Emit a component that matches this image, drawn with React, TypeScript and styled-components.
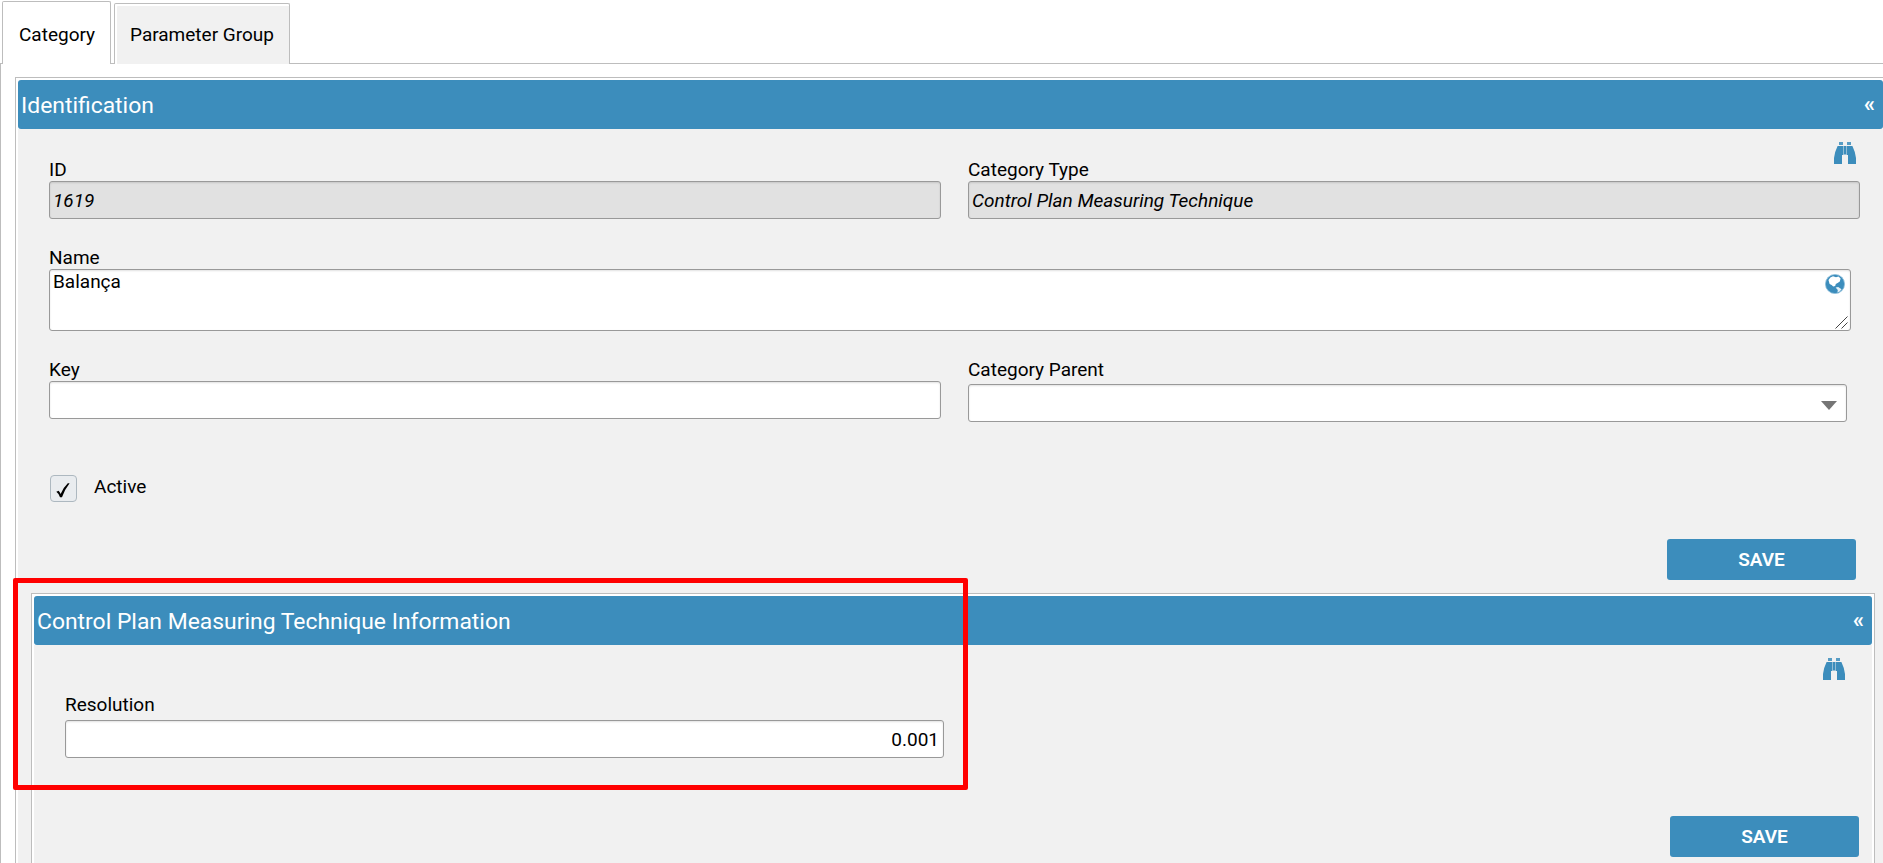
import React, { useState } from 'react';
import styled, { createGlobalStyle } from 'styled-components';

const BLUE = '#3c8dbc';
const LINE = '#bdbdbd';

const App: React.FC = () => {
  const [name, setName] = useState('Balança');
  const [key, setKey] = useState('');
  const [active, setActive] = useState(true);
  const [resolution, setResolution] = useState('0.001');

  return (
    <Page>
      <GlobalStyle />
      <TabBar>
        <Tab $active>Category</Tab>
        <Tab>Parameter Group</Tab>
      </TabBar>

      <Content>
        <Panel>
          <PanelHeader>
            <Title>Identification</Title>
            <Collapse>«</Collapse>
          </PanelHeader>
          <PanelBody>
            <Tools $height={29}>
              <Binoculars />
            </Tools>

            <Form>
              <Columns>
                <Field>
                  <Label>ID</Label>
                  <Input value="1619" readOnly />
                </Field>
                <Field>
                  <Label>Category Type</Label>
                  <Input value="Control Plan Measuring Technique" readOnly />
                </Field>
              </Columns>

              <Field>
                <Label>Name</Label>
                <TextAreaWrap>
                  <TextArea value={name} onChange={(e) => setName(e.target.value)} />
                  <GlobeSlot>
                    <Globe />
                  </GlobeSlot>
                  <Grip>
                    <svg width="13" height="13" viewBox="0 0 13 13">
                      <path d="M0.500 12.500L12.500 0.500M6.500 12.500L12.500 6.500" stroke="#444" fill="none" />
                    </svg>
                  </Grip>
                </TextAreaWrap>
              </Field>

              <Columns>
                <Field>
                  <Label>Key</Label>
                  <Input value={key} onChange={(e) => setKey(e.target.value)} />
                </Field>
                <Field>
                  <Label $gap={3}>Category Parent</Label>
                  <Select>
                    <svg width="16" height="9" viewBox="0 0 16 9">
                      <path d="M0 0h16L8 9z" fill="#757575" />
                    </svg>
                  </Select>
                </Field>
              </Columns>
            </Form>

            <CheckRow>
              <CheckBox onClick={() => setActive(!active)}>
                {active && (
                  <svg width="14" height="15" viewBox="0 0 14 15">
                    <path d="M0.3 8.8L2.6 7.8Q3.9 9 4.6 11Q7.5 4.3 11.8 0.3L13.6 0.3Q9 6 6 14.3L4 14.3Q2.6 10.3 0.3 8.8z" fill="#000" />
                  </svg>
                )}
              </CheckBox>
              <span>Active</span>
            </CheckRow>

            <Actions $top={37} $right={27}>
              <Button>SAVE</Button>
            </Actions>

            <SubPanel>
              <PanelHeader>
                <Title>Control Plan Measuring Technique Information</Title>
                <Collapse>«</Collapse>
              </PanelHeader>
              <PanelBody>
                <Tools $height={48}>
                  <Binoculars />
                </Tools>
                <Form>
                  <Field>
                    <Label $gap={4}>Resolution</Label>
                    <Input
                      $numeric
                      value={resolution}
                      onChange={(e) => setResolution(e.target.value)}
                    />
                  </Field>
                </Form>
                <Actions $top={58} $right={13}>
                  <Button>SAVE</Button>
                </Actions>
              </PanelBody>
            </SubPanel>
          </PanelBody>
        </Panel>
      </Content>

      <Highlight />
    </Page>
  );
};

export default App;

const Binoculars: React.FC = () => (
  <svg width="22" height="22" viewBox="0 0 22 22">
    <path d="M5 0h4v3H5zM13 0h4v3h-4z" fill={BLUE} opacity="0.85" />
    <path d="M3.6 4H9V13H8V22H0V16Q1 9 3.6 4zM18.4 4H13V13H14V22H22V16Q21 9 18.4 4z" fill={BLUE} />
    <path d="M9.7 4h2.6v8.5H9.7z" fill={BLUE} />
    <path d="M9 4h.7v9H9zM12.3 4h.7v9h-.7z" fill={BLUE} opacity="0.45" />
  </svg>
);

const Globe: React.FC = () => (
  <svg width="20" height="20" viewBox="0 0 20 20">
    <circle cx="10" cy="10" r="9.6" fill={BLUE} stroke="#8fc0dc" strokeWidth="0.8" />
    <path d="M3.5 6Q5 3 8 2.2L11 3.2L13.5 2.4L15.6 4.5L14.8 7.5L12.6 9L10.8 10L10.2 12L8.2 12.6L6.6 11L4.6 10z" fill="#fff" />
    <path d="M10.6 13.4L13.2 13L16.6 15.2L14.6 17.6L12.4 18.4L12.8 16z" fill="#e4f0f7" />
  </svg>
);

const GlobalStyle = createGlobalStyle`
  * {
    box-sizing: border-box;
  }

  body {
    margin: 0;
    background: #fff;
    overflow: hidden;
  }

  body, input, textarea, button {
    font-family: Roboto, 'Liberation Sans', sans-serif;
    font-size: 19px;
    color: #000;
  }
`;

const Page = styled.div`
  position: relative;
  height: 863px;
  display: flex;
  flex-direction: column;
  overflow: hidden;
`;

const TabBar = styled.div`
  position: relative;
  z-index: 1;
  flex: none;
  display: flex;
  align-items: flex-end;
  gap: 3px;
  height: 64px;
  margin-bottom: -1px;
  padding-left: 2px;
`;

const Tab = styled.div<{ $active?: boolean }>`
  width: ${(p) => (p.$active ? 109 : 176)}px;
  height: ${(p) => (p.$active ? 63 : 61)}px;
  padding: ${(p) => (p.$active ? '21px 0 0 16px' : '19px 0 0 15px')};
  border: 1px solid ${LINE};
  border-bottom: 0;
  border-radius: 2px 2px 0 0;
  background: ${(p) => (p.$active ? '#fff' : '#f1f1f1')};
  box-shadow: ${(p) => (p.$active ? 'none' : 'inset 2px 2px 0 #fff')};
  line-height: 23px;
  white-space: nowrap;
`;

const Content = styled.div`
  flex: 1;
  min-height: 0;
  padding: 13px 0 0 14px;
  border-top: 1px solid ${LINE};
  border-left: 1px solid ${LINE};
`;

const Panel = styled.section`
  padding: 2px 0 0 2px;
  border: 1px solid ${LINE};
  border-width: 1px 0 0 1px;
  background: #fff;
`;

const SubPanel = styled(Panel)`
  margin: 13px 8px 0 13px;
  padding-right: 2px;
  border-right-width: 1px;
`;

const PanelHeader = styled.header`
  display: flex;
  align-items: center;
  justify-content: space-between;
  height: 49px;
  padding: 0 8px 0 3px;
  border-radius: 3px;
  background: ${BLUE};
  color: #fff;
`;

const Title = styled.h2`
  margin: 0;
  padding-top: 2px;
  font-size: 22.9px;
  font-weight: 400;
  line-height: 28px;
`;

const Collapse = styled.span`
  padding-bottom: 1px;
  font-size: 22px;
  font-weight: 700;
  line-height: 24px;
`;

const PanelBody = styled.div`
  min-height: 240px;
  background: #f1f1f1;
`;

const Tools = styled.div<{ $height: number }>`
  display: flex;
  justify-content: flex-end;
  align-items: flex-start;
  height: ${(p) => p.$height}px;
  padding: 13px 27px 0 0;

  svg {
    flex: none;
  }
`;

const Form = styled.div`
  display: flex;
  flex-direction: column;
  gap: 27px;
  padding-left: 31px;
`;

const Columns = styled.div`
  display: grid;
  grid-template-columns: 892px 892px;
  column-gap: 27px;
`;

const Field = styled.div`
  display: flex;
  flex-direction: column;
`;

const Label = styled.label<{ $gap?: number }>`
  height: 23px;
  margin-bottom: ${(p) => p.$gap ?? 0}px;
  line-height: 23px;
`;

const Input = styled.input<{ $numeric?: boolean }>`
  width: ${(p) => (p.$numeric ? '879px' : '100%')};
  height: 38px;
  padding: 0 ${(p) => (p.$numeric ? 4 : 3)}px;
  border: 1px solid #999;
  border-radius: 3px;
  outline: none;
  background: #fff;
  box-shadow: inset 0 1px 2px rgba(0, 0, 0, 0.12);
  text-align: ${(p) => (p.$numeric ? 'right' : 'left')};

  &:read-only {
    background: #e1e1e1;
    font-style: italic;
  }
`;

const TextAreaWrap = styled.div`
  position: relative;
  width: 1802px;
  height: 62px;
`;

const TextArea = styled.textarea`
  display: block;
  width: 100%;
  height: 62px;
  padding: 0 3px;
  border: 1px solid #999;
  border-radius: 3px;
  outline: none;
  resize: none;
  box-shadow: inset 0 1px 2px rgba(0, 0, 0, 0.12);
  line-height: 23px;
`;

const GlobeSlot = styled.div`
  position: absolute;
  top: 5px;
  right: 6px;
  line-height: 0;
`;

const Grip = styled.div`
  position: absolute;
  right: 3px;
  bottom: 2px;
  line-height: 0;
  pointer-events: none;
`;

const Select = styled.div`
  display: flex;
  align-items: center;
  justify-content: flex-end;
  width: 879px;
  height: 38px;
  padding: 4px 9px 0 0;
  border: 1px solid #999;
  border-radius: 3px;
  background: #fff;
  box-shadow: inset 0 1px 2px rgba(0, 0, 0, 0.12);
`;

const CheckRow = styled.div`
  display: flex;
  gap: 17px;
  height: 27px;
  margin-top: 53px;
  padding-left: 32px;
  line-height: 23px;
`;

const CheckBox = styled.div`
  width: 27px;
  height: 27px;
  padding: 7px 0 0 5px;
  border: 1px solid #adb8c0;
  border-radius: 4px;
  background: #e9ecef;
  line-height: 0;
`;

const Actions = styled.div<{ $top: number; $right: number }>`
  display: flex;
  justify-content: flex-end;
  padding: ${(p) => p.$top}px ${(p) => p.$right}px 0 0;
`;

const Button = styled.button`
  width: 189px;
  height: 41px;
  padding: 0;
  border: 0;
  border-radius: 3px;
  background: ${BLUE};
  color: #fff;
  font-size: 19px;
  font-weight: 600;
  cursor: pointer;
`;

/* callout frame drawn over the resolution field */
const Highlight = styled.div`
  position: absolute;
  top: 578px;
  left: 13px;
  width: 955px;
  height: 212px;
  border: 5px solid #f00;
  border-radius: 2px;
  pointer-events: none;
`;
